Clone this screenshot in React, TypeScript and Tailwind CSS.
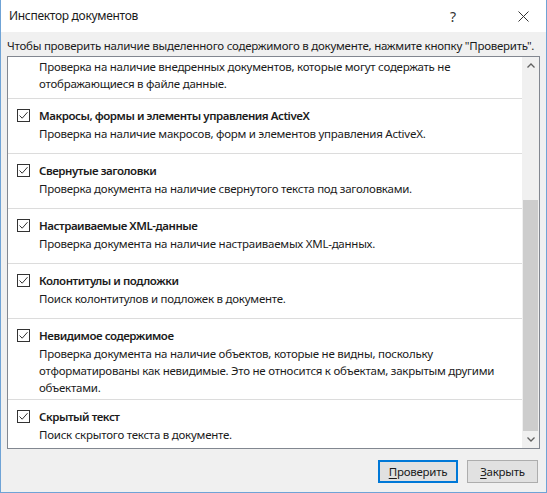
import type { ReactNode } from 'react';

const font = { fontFamily: '"Noto Sans", "Open Sans", sans-serif' };

function CheckBox() {
  return (
    <span className="flex h-[13px] w-[13px] shrink-0 items-center justify-center border border-[#333333] bg-white">
      <svg width="11" height="11" viewBox="0 0 11 11" fill="none">
        <path d="M1.5 5.5 L4.2 8.2 L9.5 2.2" stroke="#333333" strokeWidth="1" />
      </svg>
    </span>
  );
}

function Row({ title, children, pb = 'pb-[11px]', last = false }: { title: string; children: ReactNode; pb?: string; last?: boolean }) {
  return (
    <div className={`px-[9px] pt-[8px] ${pb} ${last ? '' : 'border-b border-[#dcdcdc]'}`}>
      <div className="flex items-center gap-[9px] leading-[17px]">
        <CheckBox />
        <span className="font-semibold tracking-[-0.45px] text-[#1b1b1b]">{title}</span>
      </div>
      <p className="mt-[1px] pl-[22px] leading-[17px] text-[#1b1b1b]">{children}</p>
    </div>
  );
}

export default function App() {
  return (
    <div
      className="flex h-[493px] w-[547px] flex-col overflow-hidden border-x border-b border-[#6fa3d6] bg-[#f0f0f0] text-[11.5px] tracking-[-0.25px] text-black"
      style={font}
    >
      {/* title bar */}
      <div className="flex h-[32px] shrink-0 items-center bg-white pl-[8px]">
        <span className="flex-1 text-[12px] tracking-[-0.3px] text-[#1b1b1b]">Инспектор документов</span>
        <span className="mr-[24px] w-[46px] text-center text-[14px] text-[#333]">?</span>
        <span className="flex w-[46px] justify-center">
          <svg width="11" height="11" viewBox="0 0 11 11">
            <path d="M0.5 0.5 L10.5 10.5 M10.5 0.5 L0.5 10.5" stroke="#333" strokeWidth="1" />
          </svg>
        </span>
      </div>

      <div className="whitespace-nowrap px-[6px] pt-[5px] leading-[17px] text-[#1b1b1b]">
        Чтобы проверить наличие выделенного содержимого в документе, нажмите кнопку "Проверить".
      </div>

      {/* list */}
      <div className="mx-[6px] mt-[2px] flex h-[393px] shrink-0 border border-[#828790] bg-white">
        <div className="min-w-0 flex-1 overflow-hidden">
          <div className="border-b border-[#dcdcdc] px-[9px] pb-[6px] pt-[1px]">
            <p className="pl-[22px] leading-[17px] text-[#1b1b1b]">
              Проверка на наличие внедренных документов, которые могут содержать не отображающиеся в файле данные.
            </p>
          </div>
          <Row title="Макросы, формы и элементы управления ActiveX">
            Проверка на наличие макросов, форм и элементов управления ActiveX.
          </Row>
          <Row title="Свернутые заголовки">Проверка документа на наличие свернутого текста под заголовками.</Row>
          <Row title="Настраиваемые XML-данные">Проверка документа на наличие настраиваемых XML-данных.</Row>
          <Row title="Колонтитулы и подложки">Поиск колонтитулов и подложек в документе.</Row>
          <Row title="Невидимое содержимое" pb="pb-[3px]">
            Проверка документа на наличие объектов, которые не видны, поскольку отформатированы как невидимые. Это
            не относится к объектам, закрытым другими объектами.
          </Row>
          <Row title="Скрытый текст" last>
            Поиск скрытого текста в документе.
          </Row>
        </div>

        {/* scrollbar */}
        <div className="flex w-[17px] shrink-0 flex-col bg-[#f0f0f0]">
          <div className="flex h-[17px] items-center justify-center">
            <svg width="8" height="5" viewBox="0 0 8 5">
              <path d="M0.5 4.5 L4 1 L7.5 4.5" stroke="#606060" strokeWidth="1.3" fill="none" />
            </svg>
          </div>
          <div className="flex-1 pt-[126px]">
            <div className="mx-[1px] h-full bg-[#cdcdcd]" />
          </div>
          <div className="flex h-[17px] items-center justify-center">
            <svg width="8" height="5" viewBox="0 0 8 5">
              <path d="M0.5 0.5 L4 4 L7.5 0.5" stroke="#606060" strokeWidth="1.3" fill="none" />
            </svg>
          </div>
        </div>
      </div>

      {/* buttons */}
      <div className="flex justify-end gap-[9px] pr-[8px] pt-[11px]">
        <button className="h-[23px] w-[80px] border-2 border-[#0078d7] bg-[#e1e1e1] text-[#1b1b1b]">
          <span className="underline underline-offset-2">П</span>роверить
        </button>
        <button className="h-[23px] w-[71px] border border-[#adadad] bg-[#e1e1e1] text-[#1b1b1b]">
          <span className="underline underline-offset-2">З</span>акрыть
        </button>
      </div>
    </div>
  );
}
